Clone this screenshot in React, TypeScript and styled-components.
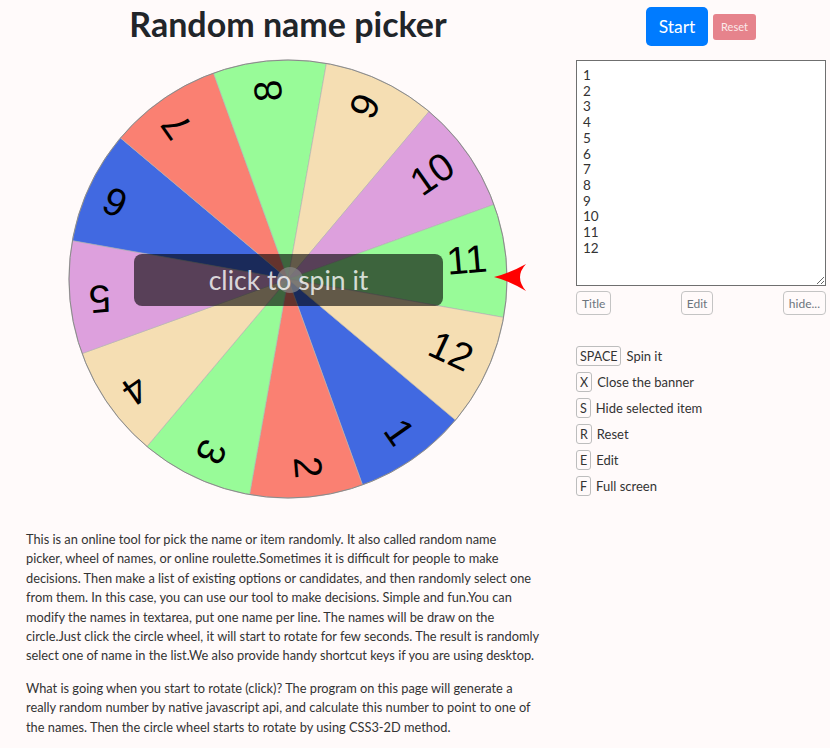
import React from "react";
import styled, { createGlobalStyle } from "styled-components";

const GlobalStyle = createGlobalStyle`
  html, body { margin: 0; padding: 0; background: #fffafa; }
  body { font-family: Lato, "Open Sans", sans-serif; color: #333; }
  * { box-sizing: border-box; }
`;

const Page = styled.div`
  display: grid;
  grid-template-columns: 576px 250px;
  width: 830px;
  min-height: 748px;
`;

const LeftColumn = styled.div`
  display: flex;
  flex-direction: column;
`;

const Title = styled.h1`
  margin: 0;
  padding-top: 3px;
  text-align: center;
  font-family: Lato, sans-serif;
  font-weight: 700;
  font-size: 34px;
  line-height: 41px;
  color: #212529;
`;

const WheelArea = styled.div`
  position: relative;
  width: 576px;
  height: 442px;
  margin-top: 15px;
  cursor: pointer;
`;

const Overlay = styled.div`
  position: absolute;
  left: 134px;
  top: 195px;
  width: 309px;
  height: 52px;
  border-radius: 8px;
  background: rgba(0, 0, 0, 0.6);
`;

const CenterDot = styled.div`
  position: absolute;
  left: 277px;
  top: 208px;
  width: 26px;
  height: 26px;
  border-radius: 50%;
  background: rgba(136, 136, 136, 0.7);
`;

const OverlayLabel = styled.div`
  position: absolute;
  left: 134px;
  top: 195px;
  width: 309px;
  height: 52px;
  display: flex;
  align-items: center;
  justify-content: center;
  font-family: Lato, sans-serif;
  font-size: 26.5px;
  color: rgba(255, 255, 255, 0.8);
`;

const Description = styled.div`
  padding-left: 26px;
  margin-top: 29px;
`;

const Paragraph = styled.p`
  margin: 0 0 13px 0;
  white-space: nowrap;
  font-family: Lato, sans-serif;
  font-size: 12.8px;
  line-height: 19.4px;
  color: #333;
`;

const RightColumn = styled.div`
  display: flex;
  flex-direction: column;
  padding-top: 7px;
`;

const ActionRow = styled.div`
  display: flex;
  justify-content: center;
  align-items: center;
  gap: 5px;
`;

const StartButton = styled.button`
  width: 62px;
  height: 39px;
  border: none;
  border-radius: 5px;
  background: #007bff;
  color: #fff;
  font-family: Lato, sans-serif;
  font-size: 17.5px;
  padding: 0;
`;

const ResetButton = styled.button`
  width: 43px;
  height: 26px;
  border: none;
  border-radius: 3px;
  background: #e6838c;
  color: #fbe9ea;
  font-family: Lato, sans-serif;
  font-size: 11px;
  padding: 0;
`;

const NamesInput = styled.textarea`
  margin-top: 14px;
  width: 250px;
  height: 226px;
  border: 1px solid #6f6f6f;
  background: #fff;
  padding: 7px 6px;
  font-family: Lato, sans-serif;
  font-size: 13.5px;
  line-height: 15.7px;
  color: #333;
  overflow-y: scroll;
  outline: none;
`;

const ToolRow = styled.div`
  display: flex;
  justify-content: space-between;
  margin-top: 5px;
`;

const ToolButton = styled.button`
  height: 24px;
  padding: 0 5px;
  border: 1px solid #c4c4c4;
  border-radius: 4px;
  background: transparent;
  color: #6c757d;
  font-family: Lato, sans-serif;
  font-size: 12px;
`;

const ShortcutList = styled.div`
  display: flex;
  flex-direction: column;
  gap: 6px;
  margin-top: 31px;
`;

const ShortcutRow = styled.div`
  display: flex;
  align-items: center;
  gap: 5px;
  height: 20px;
`;

const Key = styled.kbd`
  display: inline-flex;
  align-items: center;
  height: 20px;
  padding: 0 3px;
  border: 1px solid #bdbdbd;
  border-radius: 3px;
  font-family: Lato, sans-serif;
  font-size: 12.5px;
  color: #333;
`;

const ShortcutLabel = styled.span`
  font-family: Lato, sans-serif;
  font-size: 13px;
  color: #333;
`;

const names = ["1", "2", "3", "4", "5", "6", "7", "8", "9", "10", "11", "12"];
const colors = [
  "#4169E1", "#FA8072", "#98FB98", "#F5DEB3", "#DDA0DD",
  "#4169E1", "#FA8072", "#98FB98", "#F5DEB3", "#DDA0DD",
  "#98FB98", "#F5DEB3",
];

const CX = 288;
const CY = 220;
const R = 219;

const pt = (deg: number, r: number) => {
  const a = (deg * Math.PI) / 180;
  return [CX + r * Math.cos(a), CY + r * Math.sin(a)];
};

const Wheel: React.FC = () => (
  <svg width={576} height={442} viewBox="0 0 576 442">
    {names.map((n, i) => {
      const c = -4.9 + (i - 10) * 30;
      const [x1, y1] = pt(c - 15, R);
      const [x2, y2] = pt(c + 15, R);
      return (
        <path
          key={"s" + n}
          d={`M${CX},${CY} L${x1},${y1} A${R},${R} 0 0 1 ${x2},${y2} Z`}
          fill={colors[i]}
          stroke="#b0b0b0"
          strokeWidth={0.6}
        />
      );
    })}
    <circle cx={CX} cy={CY} r={R} fill="none" stroke="#8a8a8a" strokeWidth={1} />
    {names.map((n, i) => {
      const c = -4.9 + (i - 10) * 30;
      return (
        <text
          key={"t" + n}
          transform={`rotate(${c} ${CX} ${CY})`}
          x={CX + 200}
          y={CY - 4}
          textAnchor="end"
          dominantBaseline="central"
          fontFamily="'Liberation Sans', Arial, sans-serif"
          fontSize={39}
          fill="#000"
        >
          {n}
        </text>
      );
    })}
    <path
      d="M494,218 Q510,214 526,205 Q514,218 526,232 Q510,222 494,218 Z"
      fill="#ff0000"
    />
  </svg>
);

const shortcuts: [string, string][] = [
  ["SPACE", "Spin it"],
  ["X", "Close the banner"],
  ["S", "Hide selected item"],
  ["R", "Reset"],
  ["E", "Edit"],
  ["F", "Full screen"],
];

export default function App() {
  return (
    <>
      <GlobalStyle />
      <Page>
        <LeftColumn>
          <Title>Random name picker</Title>
          <WheelArea>
            <Wheel />
            <Overlay />
            <CenterDot />
            <OverlayLabel>click to spin it</OverlayLabel>
          </WheelArea>
          <Description>
            <Paragraph>
              This is an online tool for pick the name or item randomly. It also called random name
              <br />
              picker, wheel of names, or online roulette.Sometimes it is difficult for people to make
              <br />
              decisions. Then make a list of existing options or candidates, and then randomly select one
              <br />
              from them. In this case, you can use our tool to make decisions. Simple and fun.You can
              <br />
              modify the names in textarea, put one name per line. The names will be draw on the
              <br />
              circle.Just click the circle wheel, it will start to rotate for few seconds. The result is randomly
              <br />
              select one of name in the list.We also provide handy shortcut keys if you are using desktop.
            </Paragraph>
            <Paragraph>
              What is going when you start to rotate (click)? The program on this page will generate a
              <br />
              really random number by native javascript api, and calculate this number to point to one of
              <br />
              the names. Then the circle wheel starts to rotate by using CSS3-2D method.
            </Paragraph>
          </Description>
        </LeftColumn>
        <RightColumn>
          <ActionRow>
            <StartButton>Start</StartButton>
            <ResetButton>Reset</ResetButton>
          </ActionRow>
          <NamesInput defaultValue={names.join("\n")} spellCheck={false} />
          <ToolRow>
            <ToolButton>Title</ToolButton>
            <ToolButton>Edit</ToolButton>
            <ToolButton>hide...</ToolButton>
          </ToolRow>
          <ShortcutList>
            {shortcuts.map(([k, label]) => (
              <ShortcutRow key={k}>
                <Key>{k}</Key>
                <ShortcutLabel>{label}</ShortcutLabel>
              </ShortcutRow>
            ))}
          </ShortcutList>
        </RightColumn>
      </Page>
    </>
  );
}
